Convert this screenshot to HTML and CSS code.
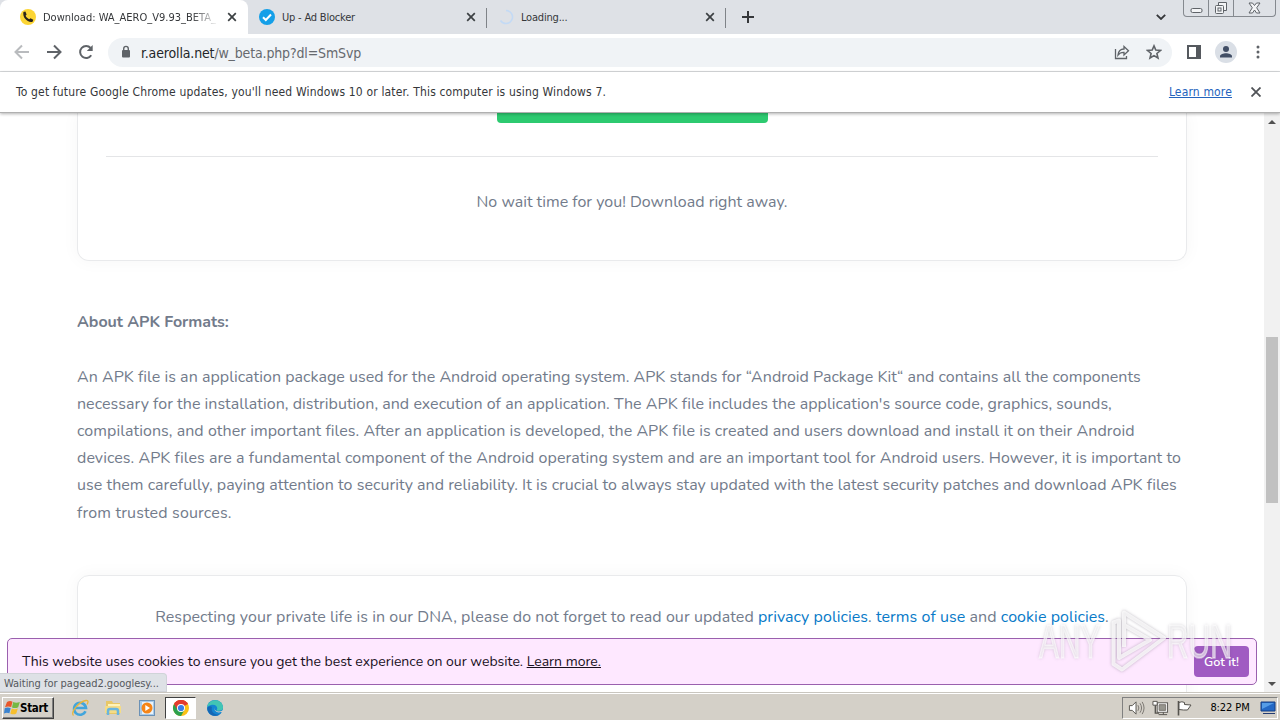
FILE: index.html
```html
<!DOCTYPE html>
<html lang="en">
<head>
    <meta charset="UTF-8">
    <meta name="viewport" content="width=device-width, initial-scale=1.0">
    <title>Download: WA_AERO_V9.93_BETA</title>
    <link rel="stylesheet" href="styles.css">
</head>
<body>

    <!-- tab strip -->
    <div class="tabs">
        <div class="tab active">
            <svg class="favicon" viewBox="0 0 16 16"><circle cx="8" cy="8" r="8" fill="#fcd535"/><path d="M3.400 3 5.400 2.400l1.200 3-1 1.300c.9 1.700 2 2.700 3.600 3.500l1.300-1 2.800 1.500-.7 2c-5 1.300-10.300-4-9.200-9.700z" fill="#29231b"/></svg>
            <span class="tab-title fade">Download: WA_AERO_V9.93_BETA_</span>
            <svg class="close" viewBox="0 0 10 10"><path d="M1.200 1.200l7.600 7.600M8.800 1.200L1.200 8.800"/></svg>
        </div>
        <div class="tab">
            <svg class="favicon" viewBox="0 0 16 16"><circle cx="8" cy="8" r="8" fill="#149fe8"/><path d="M4 8.300l2.800 2.700L12 5.500" fill="none" stroke="#fff" stroke-width="2"/></svg>
            <span class="tab-title tight">Up - Ad Blocker</span>
            <svg class="close" viewBox="0 0 10 10"><path d="M1.200 1.200l7.600 7.600M8.800 1.200L1.200 8.800"/></svg>
        </div>
        <div class="tab">
            <svg class="favicon" viewBox="0 0 16 16"><path d="M8 1.500a6.500 6.500 0 1 1-5.500 10" fill="none" stroke="#c3daf5" stroke-width="1.600"/></svg>
            <span class="tab-title tight">Loading...</span>
            <svg class="close" viewBox="0 0 10 10"><path d="M1.200 1.200l7.600 7.600M8.800 1.200L1.200 8.800"/></svg>
        </div>
        <svg class="new-tab" viewBox="0 0 12 12"><path d="M6 0v12M0 6h12"/></svg>
        <svg class="chevron" viewBox="0 0 10 6"><path d="M.8.8L5 5 9.200.8"/></svg>
        <div class="window-buttons">
            <span class="min"><svg width="13" height="16" viewBox="0 0 13 16"><rect x="1" y="8.500" width="11" height="4" rx="1.500"/></svg></span>
            <span class="max"><svg width="14" height="16" viewBox="0 0 14 16"><path d="M4.500 5V2.500h8v8H10"/><rect x="1.500" y="5.500" width="8" height="8" rx="1"/><rect x="4" y="8" width="3" height="3"/></svg></span>
            <span class="exit"><svg width="13" height="16" viewBox="0 0 13 16"><path d="M1 3h3.500l2 2.500L8.500 3H12L8.700 7.800 12 13H8.500l-2-3-2 3H1l3.300-5.200z"/></svg></span>
        </div>
    </div>

    <!-- toolbar -->
    <div class="toolbar">
        <svg class="nav back" viewBox="0 0 16 16"><path d="M15 8H2M8 1.500L1.500 8 8 14.500"/></svg>
        <svg class="nav" viewBox="0 0 16 16"><path d="M1 8h13M8 1.500L14.500 8 8 14.500"/></svg>
        <svg class="nav" viewBox="0 0 16 16"><path d="M13.200 11.200A6 6 0 1 1 12.600 4"/><path d="M14.700 1v6H8.800z" class="solid"/></svg>
        <div class="address">
            <svg class="lock" viewBox="0 0 10 14"><rect x="1" y="5" width="8" height="7.500" rx="1" fill="#5f6368"/><path d="M2.700 5.500V3.700a2.300 2.300 0 0 1 4.600 0v1.800" fill="none" stroke="#5f6368" stroke-width="1.400"/></svg>
            <span class="url"><span class="host">r.aerolla.net</span>/w_beta.php?dl=SmSvp</span>
            <svg class="share" viewBox="0 0 16 16"><path d="M1.500 5v9.500h11V12M4 11c.5-4 2.500-6 6-6V2.500l4.500 4.200L10 11V8.300C7.500 8.200 5.500 9 4 11z"/></svg>
            <svg class="star" viewBox="0 0 16 16"><path d="M8 1.900l1.800 4.200 4.600.4-3.500 3 1.100 4.500L8 11.600 4 14l1.100-4.500-3.500-3 4.600-.4z"/></svg>
        </div>
        <svg class="panel" viewBox="0 0 14 14"><path d="M1 1h12v12H1z" fill="none" stroke="#55595e" stroke-width="2"/><path d="M9 1h4v12H9z" fill="#55595e"/></svg>
        <svg class="profile" viewBox="0 0 22 22"><circle cx="11" cy="11" r="11" fill="#dadfe6"/><circle cx="11" cy="8" r="3" fill="#414e65"/><path d="M5 16.500v-1.300c0-2 3.500-3 6-3s6 1 6 3v1.300z" fill="#414e65"/></svg>
        <svg class="dots" viewBox="0 0 4 14"><circle cx="2" cy="2" r="1.500"/><circle cx="2" cy="7" r="1.500"/><circle cx="2" cy="12" r="1.500"/></svg>
    </div>

    <div class="infobar">
        <span class="info-text">To get future Google Chrome updates, you'll need Windows 10 or later. This computer is using Windows 7.</span>
        <a class="info-link">Learn more</a>
        <svg class="info-close" viewBox="0 0 10 10"><path d="M.5.500l9 9M9.500.500l-9 9"/></svg>
    </div>

    <!-- page -->
    <div class="viewport">
        <div class="page">
            <div class="card download">
                <div class="green-button"></div>
                <hr>
                <p>No wait time for you! Download right away.</p>
            </div>

            <h2>About APK Formats:</h2>
            <p class="text">
                <span class="line">An APK file is an application package used for the Android operating system. APK stands for “Android Package Kit“ and contains all the components</span>
                <span class="line">necessary for the installation, distribution, and execution of an application. The APK file includes the application's source code, graphics, sounds,</span>
                <span class="line wide">compilations, and other important files. After an application is developed, the APK file is created and users download and install it on their Android</span>
                <span class="line wider">devices. APK files are a fundamental component of the Android operating system and are an important tool for Android users. However, it is important to</span>
                <span class="line">use them carefully, paying attention to security and reliability. It is crucial to always stay updated with the latest security patches and download APK files</span>
                <span class="line last">from trusted sources.</span>
            </p>

            <div class="card privacy">
                <p>Respecting your private life is in our DNA, please do not forget to read our updated <a>privacy policies</a>. <a>terms of use</a> and <a>cookie policies</a>.</p>
            </div>
        </div>
        <div class="scrollbar">
            <span class="arrow up"></span>
            <span class="thumb"></span>
            <span class="arrow down"></span>
        </div>

        <div class="cookies">
            <span class="cookie-text">This website uses cookies to ensure you get the best experience on our website. <u>Learn more.</u></span>
            <span class="got-it">Got it!</span>
        </div>
        <div class="status">Waiting for pagead2.googlesy...</div>
        <div class="watermark">
            <span>ANY</span>
            <svg viewBox="0 0 56 64"><path d="M14 16v-12.500L54 29 12 60.500 3.500 55V13.500L9 11.500V49L40 31 14 16v22"/></svg>
            <span>RUN</span>
        </div>
    </div>

    <!-- taskbar -->
    <div class="taskbar">
        <div class="start">
            <svg viewBox="0 0 16 16"><path d="M3 2q3-2 5.500-.3L7.200 7Q4 5.700 1 7.200z" fill="#e8572a"/><path d="M9.200 2q3 1.500 6.600 0L14.200 7.200q-3 1.600-6.200.2z" fill="#75b843"/><path d="M.7 8.300q3-1.500 6 0L5.400 13.300q-2.600-1.400-5.400.2z" fill="#3b83cf"/><path d="M7.800 8.500q3 1.500 6 0l-1.500 5q-3 1.700-6 0z" fill="#f7bf2d"/></svg>
            <span>Start</span>
        </div>
        <svg class="task ie" viewBox="0 0 18 18"><path d="M14.500 12.300A6 6 0 1 1 15 9H4.500" fill="none" stroke="#42a5dc" stroke-width="2.600"/><path d="M2.500 16.500C-.5 13.500 7 3 15 1.500c3-.3 2 2.500 1 4" fill="none" stroke="#e8b63c" stroke-width="1.300"/></svg>
        <svg class="task folder" viewBox="0 0 18 18"><path d="M2 2h6l1 2h7v11H2z" fill="#e8c766"/><path d="M4 5h12v6H4z" fill="#fff3b8"/><path d="M1 7h16v7H1z" fill="#f5dc86"/><path d="M4 16v-4q0-2 2-2h6q2 0 2 2v4" fill="none" stroke="#69b5df" stroke-width="2.500"/></svg>
        <svg class="task media" viewBox="0 0 18 18"><rect x="1.500" y="1.500" width="15" height="15" fill="#a8cbea" stroke="#6b91b6"/><rect x="4" y="3" width="11" height="12" fill="#e9f3fb"/><circle cx="9" cy="9" r="5.500" fill="#f58518"/><path d="M7.300 6v6l4.700-3z" fill="#fff"/></svg>
        <div class="task-active">
            <svg viewBox="0 0 18 18"><circle cx="9" cy="9" r="8" fill="#fbc116"/><path d="M9 9L2.070 5A8 8 0 0 1 15.930 5z" fill="#e33b2e"/><path d="M9 9L2.070 5A8 8 0 0 0 9 17l4-7z" fill="#2da14e"/><path d="M9 5h6.930A8 8 0 0 0 2.070 5l3.500 6z" fill="#e33b2e"/><circle cx="9" cy="9" r="4" fill="#fff"/><circle cx="9" cy="9" r="3.100" fill="#397ee8"/></svg>
        </div>
        <svg class="task edge" viewBox="0 0 18 18"><circle cx="9" cy="9" r="8" fill="#1385d2"/><path d="M1.200 8C2-.5 16-1.500 17 8c.3 3-2.500 4.200-6.500 3.400C13 8 9 4.500 5 6 3 6.600 1.800 7.500 1.200 8z" fill="#42c5b4"/><path d="M6 8c-1.500 4 2 8.500 8 7.200-5 3.500-12 1-12.700-5.200C1.500 7 4.500 6.500 6 8z" fill="#1567b4"/><path d="M8 8.500c0 3.500 4.500 5 8.500 3l1.500-2V13h-3c-4 1.500-7-1.500-7-4.500z" fill="#d6d1c8"/></svg>
        <div class="tray">
            <svg class="sound" viewBox="0 0 18 16"><path d="M1.500 5.500h3l4-4v13l-4-4h-3z" fill="#fff" stroke="#55534e"/><path d="M10.500 5q2 3 0 6M12.700 3q3.300 5 0 10M15 1.500q4 6.500 0 13" fill="none" stroke="#77736d"/></svg>
            <svg class="net" viewBox="0 0 18 16"><rect x="5.500" y="2.500" width="11" height="10" fill="#fff" stroke="#55534e"/><path d="M7.500 4.500h7v6h-7z" fill="#96958d" stroke="#77736d"/><path d="M7 15h9M12 12.500V15" fill="none" stroke="#55534e"/><path d="M1 1h4.500v4H1z" fill="#fff" stroke="#55534e"/><path d="M3.500 5v8.500h4" fill="none" stroke="#55534e" stroke-width="1.400"/></svg>
            <svg class="flag" viewBox="0 0 17 16"><path d="M2.500 1v14.500" stroke="#55534e" stroke-width="1.600"/><path d="M3 2.500q3-1.500 5.500 0v2l6.500.5-3.500 5H7.500L3 9.500z" fill="#fff" stroke="#55534e"/></svg>
            <span class="clock">8:22 PM</span>
            <svg class="desktop" viewBox="0 0 16 16"><path d="M1 2h14v9H1z" fill="#2368c5" stroke="#173e83"/><path d="M2 3h12L2 9z" fill="#559ce6"/><path d="M3 13h12v1H3z" fill="#233b71"/></svg>
        </div>
    </div>

</body>
</html>
```
FILE: styles.css
```css
*{
    box-sizing: border-box;
    margin: 0;
    padding: 0;
}

body{
    display: flex;
    flex-direction: column;
    width: 1280px;
    height: 720px;
    overflow: hidden;
    background: #ffffff;
    font-family: Tahoma, "DejaVu Sans Condensed", "DejaVu Sans", sans-serif;
    font-stretch: condensed;
    font-size: 11px;
    color: #35373a;
}

svg, .tabs span, .taskbar span{
    flex-shrink: 0;
}

/* tab strip */
.tabs{
    display: flex;
    height: 34px;
    background: #dee1e6;
}

.tab{
    display: flex;
    align-items: center;
    width: 239px;
    height: 34px;
    padding: 0 11px 0 11px;
}

.tab.active{
    width: 248px;
    padding: 0 11px 0 20px;
    background: #ffffff;
    border-radius: 8px 8px 0 0;
}

.tab:nth-child(2), .tab:nth-child(3){
    background: linear-gradient(#7f8388, #7f8388) right 8px / 1px 20px no-repeat;
}

.favicon{
    width: 16px;
    height: 16px;
    margin-right: 7px;
}

.tab-title{
    flex: 1;
    white-space: nowrap;
    overflow: hidden;
}

.tight{
    letter-spacing: -0.2px;
}

.fade{
    -webkit-mask-image: linear-gradient(to right, #000 84%, transparent);
    mask-image: linear-gradient(to right, #000 84%, transparent);
}

.close{
    width: 10px;
    height: 10px;
    margin-left: 8px;
    stroke: #3c4043;
    stroke-width: 1.7;
}

.new-tab{
    width: 12px;
    height: 12px;
    margin: 11px 0 0 16px;
    stroke: #35373a;
    stroke-width: 2;
}

.chevron{
    width: 10px;
    height: 6px;
    margin: 14px 17px 0 auto;
    fill: none;
    stroke: #35373a;
    stroke-width: 1.8;
}

.window-buttons{
    display: flex;
    width: 93px;
    height: 17px;
    margin-right: 4px;
    border: 1px solid #85898f;
    border-top: 0;
    border-radius: 0 0 4px 4px;
}

.window-buttons span{
    display: flex;
    justify-content: center;
    width: 25px;
    border-right: 1px solid #85898f;
}

.window-buttons .exit{
    width: 41px;
    border: 0;
}

.window-buttons svg{
    fill: #f3f4f6;
    stroke: #5f6368;
}

/* toolbar */
.toolbar{
    display: flex;
    align-items: center;
    height: 38px;
    padding: 0 20px 1px 14px;
    border-bottom: 1px solid #d9dbdd;
    background: #ffffff;
}

.nav{
    width: 16px;
    height: 16px;
    margin-right: 16px;
    fill: none;
    stroke: #5f6368;
    stroke-width: 2;
}

.back{
    stroke: #b9bbbe;
}

.nav .solid{
    fill: #5f6368;
    stroke: none;
}

.address{
    display: flex;
    align-items: center;
    width: 1064px;
    height: 29px;
    margin-left: -2px;
    padding: 0 10px 0 13px;
    border-radius: 15px;
    background: #f0f3f6;
}

.lock{
    width: 10px;
    height: 14px;
    margin-right: 10px;
}

.url{
    flex: 1;
    padding-top: 1px;
    font-size: 14px;
    letter-spacing: -0.15px;
    color: #66696e;
}

.host{
    color: #242629;
}

.share, .star{
    width: 16px;
    height: 16px;
    fill: none;
    stroke: #5f6368;
    stroke-width: 1.3;
}

.star{
    margin-left: 16px;
    stroke-width: 1.6;
}

.panel{
    width: 14px;
    height: 14px;
    margin-left: 15px;
}

.profile{
    width: 22px;
    height: 22px;
    margin-left: 14px;
}

.dots{
    width: 4px;
    height: 14px;
    margin-left: auto;
    fill: #5f6368;
}

/* update notice */
.infobar{
    display: flex;
    align-items: center;
    height: 41px;
    padding: 0 19px 1px 16px;
    border-bottom: 1px solid #b0b0b0;
    background: #ffffff;
    box-shadow: 0 1px 3px rgba(0, 0, 0, 0.3);
    position: relative;
    z-index: 2;
    font-size: 12px;
    letter-spacing: 0.16px;
    white-space: nowrap;
}

.info-link{
    margin-left: auto;
    color: #2463bd;
    text-decoration: underline;
}

.info-close{
    width: 10px;
    height: 10px;
    margin-left: 19px;
    stroke: #505357;
    stroke-width: 1.8;
}

/* page */
.viewport{
    display: flex;
    height: 579px;
    position: relative;
    overflow: hidden;
    font-family: Nunito, Lato, sans-serif;
    font-stretch: normal;
    font-size: 16px;
    line-height: 27.2px;
    color: #727b8b;
}

.page{
    width: 1264px;
    padding: 0 77px;
    white-space: nowrap;
}

.card{
    border: 1px solid #e9eaec;
    border-radius: 12px;
    box-shadow: 0 0 18px rgba(0, 0, 0, 0.04);
    text-align: center;
}

.download{
    height: 148px;
    padding: 0 28px;
    border-top: 0;
    border-radius: 0 0 12px 12px;
}

.green-button{
    width: 271px;
    height: 10px;
    margin: 0 auto;
    border-radius: 0 0 4px 4px;
    background: #2dca70;
}

hr{
    margin: 33px 0 32px;
    border: 0;
    border-top: 1px solid #e4e5e7;
}

h2{
    margin-top: 48px;
    font-size: 16px;
    line-height: 27px;
    letter-spacing: -0.05px;
}

.text{
    margin-top: 27.6px;
    letter-spacing: 0.03px;
}

.line{
    display: block;
}

.wide{
    letter-spacing: 0.055px;
}

.wider{
    letter-spacing: 0.065px;
}

.last{
    letter-spacing: 0.15px;
}

.privacy{
    height: 160px;
    margin-top: 48.2px;
    padding-top: 28px;
    letter-spacing: 0.06px;
}

.privacy a{
    color: #087ac8;
}

.scrollbar{
    display: flex;
    flex-direction: column;
    align-items: center;
    width: 16px;
    height: 579px;
    padding: 7px 0 6px;
    background: #f1f1f1;
}

.thumb{
    width: 12px;
    height: 166px;
    margin: 213px 0 auto;
    background: #c1c1c1;
}

.arrow{
    border: 4px solid transparent;
}

.up{
    border-top: 0;
    border-bottom-color: #505050;
}

.down{
    border-bottom: 0;
    border-top-color: #505050;
}

.cookies{
    display: flex;
    align-items: center;
    justify-content: space-between;
    position: absolute;
    left: 7px;
    bottom: 7px;
    width: 1250px;
    height: 47px;
    padding: 0 7px 0 14px;
    border: 1px solid #9a60ae;
    border-radius: 5px;
    background: #fee8ff;
    font-size: 14px;
    color: #19101d;
}

.got-it{
    width: 55px;
    height: 31px;
    border-radius: 4px;
    background: #a05bc2;
    font-size: 12.6px;
    font-weight: 600;
    line-height: 31px;
    text-align: center;
    color: #ffffff;
}

.status{
    position: absolute;
    left: 0;
    bottom: 0;
    width: 167px;
    height: 19px;
    padding-left: 4px;
    border: 1px solid #d0d3d8;
    border-left: 0;
    border-radius: 0 4px 0 0;
    background: #dee1e6;
    font: 11px/19px Tahoma, "DejaVu Sans Condensed", sans-serif;
    font-stretch: condensed;
    letter-spacing: -0.03px;
    white-space: nowrap;
    color: #55585d;
}

.watermark{
    display: flex;
    align-items: center;
    position: absolute;
    left: 1039px;
    top: 496px;
    font: 49px/64px "Liberation Sans", sans-serif;
    color: rgba(255, 255, 255, 0.6);
    -webkit-text-stroke: 1.5px rgba(255, 255, 255, 0.5);
    text-shadow: 0 0 4px rgba(90, 80, 100, 0.35);
}

.watermark span{
    width: 64px;
    transform: scaleX(0.61);
    transform-origin: left;
}

.watermark svg{
    width: 56px;
    height: 64px;
    margin: 0 1px 0 7px;
    fill: none;
    stroke: rgba(255, 255, 255, 0.75);
    stroke-width: 4;
    stroke-linejoin: round;
    filter: drop-shadow(0 0 1.5px rgba(90, 80, 100, 0.5));
}

/* taskbar */
.taskbar{
    display: flex;
    align-items: center;
    height: 28px;
    padding: 2px 2px 0;
    border-top: 1px solid #c9c6bf;
    background: #d4d0c8;
    box-shadow: inset 0 1px #ffffff;
    color: #000000;
}

.start{
    display: flex;
    align-items: center;
    width: 52px;
    height: 22px;
    padding-left: 1px;
    border: 1px solid;
    border-color: #ffffff #404040 #404040 #ffffff;
    box-shadow: inset -1px -1px #808080;
    font-size: 11.5px;
    font-weight: bold;
    letter-spacing: -0.3px;
}

.start svg{
    width: 16px;
    height: 16px;
}

.task{
    width: 18px;
    height: 18px;
}

.ie{
    margin-left: 17px;
}

.folder{
    margin-left: 15px;
}

.media{
    margin-left: 16px;
}

.task-active{
    display: flex;
    align-items: center;
    justify-content: center;
    width: 31px;
    height: 22px;
    margin: 0 9px;
    border: 1px solid;
    border-color: #404040 #ffffff #ffffff #404040;
    background: #ffffff;
}

.edge{
    margin-left: 1px;
}

.task-active svg{
    width: 18px;
    height: 18px;
}

.tray{
    display: flex;
    align-items: center;
    width: 156px;
    height: 22px;
    margin-left: auto;
    padding-left: 5px;
    border: 1px solid;
    border-color: #808080 #ffffff #ffffff #808080;
}

.tray svg{
    width: 17px;
    height: 16px;
    margin-right: 7px;
}

.clock{
    margin: 0 auto;
    letter-spacing: -0.1px;
}

.tray .desktop{
    width: 16px;
    margin-right: 1px;
}
```
